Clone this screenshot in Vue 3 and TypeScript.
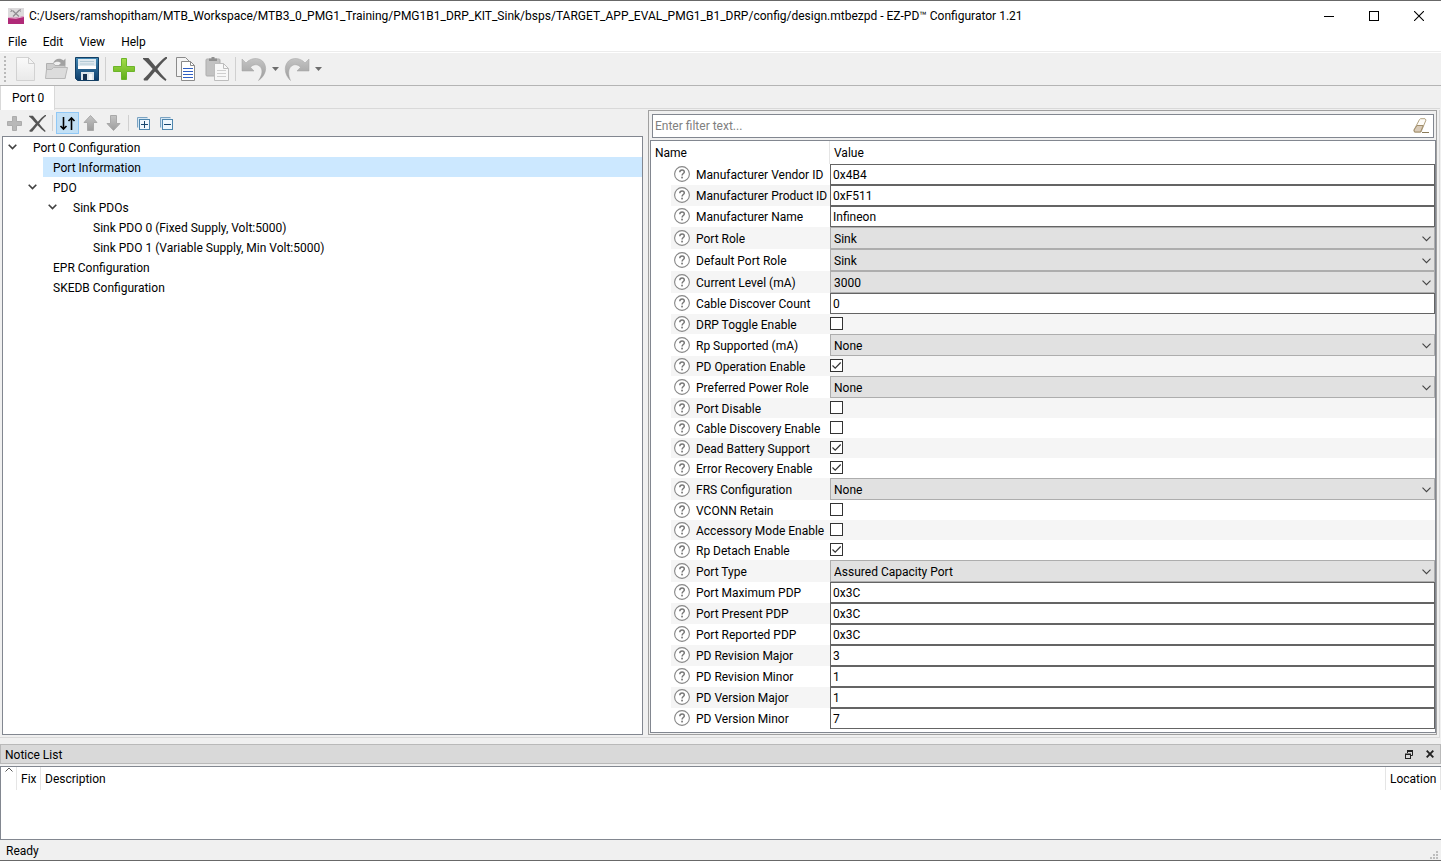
<script setup lang="ts">
import { computed, ref } from 'vue'

type Kind = 'text' | 'select' | 'check'

interface Property {
  label: string
  kind: Kind
  value: string | boolean
}

interface TreeNode {
  label: string
  level: number
  branch: boolean
}

const menus = ['File', 'Edit', 'View', 'Help']

const tree: TreeNode[] = [
  { label: 'Port 0 Configuration', level: 0, branch: true },
  { label: 'Port Information', level: 1, branch: false },
  { label: 'PDO', level: 1, branch: true },
  { label: 'Sink PDOs', level: 2, branch: true },
  { label: 'Sink PDO 0 (Fixed Supply, Volt:5000)', level: 3, branch: false },
  { label: 'Sink PDO 1 (Variable Supply, Min Volt:5000)', level: 3, branch: false },
  { label: 'EPR Configuration', level: 1, branch: false },
  { label: 'SKEDB Configuration', level: 1, branch: false },
]

const selected = ref('Port Information')
const filter = ref('')
const sorted = ref(true)

const properties = ref<Property[]>([
  { label: 'Manufacturer Vendor ID', kind: 'text', value: '0x4B4' },
  { label: 'Manufacturer Product ID', kind: 'text', value: '0xF511' },
  { label: 'Manufacturer Name', kind: 'text', value: 'Infineon' },
  { label: 'Port Role', kind: 'select', value: 'Sink' },
  { label: 'Default Port Role', kind: 'select', value: 'Sink' },
  { label: 'Current Level (mA)', kind: 'select', value: '3000' },
  { label: 'Cable Discover Count', kind: 'text', value: '0' },
  { label: 'DRP Toggle Enable', kind: 'check', value: false },
  { label: 'Rp Supported (mA)', kind: 'select', value: 'None' },
  { label: 'PD Operation Enable', kind: 'check', value: true },
  { label: 'Preferred Power Role', kind: 'select', value: 'None' },
  { label: 'Port Disable', kind: 'check', value: false },
  { label: 'Cable Discovery Enable', kind: 'check', value: false },
  { label: 'Dead Battery Support', kind: 'check', value: true },
  { label: 'Error Recovery Enable', kind: 'check', value: true },
  { label: 'FRS Configuration', kind: 'select', value: 'None' },
  { label: 'VCONN Retain', kind: 'check', value: false },
  { label: 'Accessory Mode Enable', kind: 'check', value: false },
  { label: 'Rp Detach Enable', kind: 'check', value: true },
  { label: 'Port Type', kind: 'select', value: 'Assured Capacity Port' },
  { label: 'Port Maximum PDP', kind: 'text', value: '0x3C' },
  { label: 'Port Present PDP', kind: 'text', value: '0x3C' },
  { label: 'Port Reported PDP', kind: 'text', value: '0x3C' },
  { label: 'PD Revision Major', kind: 'text', value: '3' },
  { label: 'PD Revision Minor', kind: 'text', value: '1' },
  { label: 'PD Version Major', kind: 'text', value: '1' },
  { label: 'PD Version Minor', kind: 'text', value: '7' },
])

const visible = computed(() =>
  properties.value.filter((p) => p.label.toLowerCase().includes(filter.value.toLowerCase())),
)

const idOf = (label: string) => 'p-' + label.toLowerCase().replace(/[^a-z0-9]+/g, '-')
</script>

<template>
  <div class="window">
    <svg class="defs" width="0" height="0" aria-hidden="true">
      <defs>
        <linearGradient id="g-grey" x1="0" y1="0" x2="0" y2="1">
          <stop offset="0" stop-color="#c4c4c4" /><stop offset="1" stop-color="#9c9c9c" />
        </linearGradient>
        <linearGradient id="g-page" x1="0" y1="0" x2="0" y2="1">
          <stop offset="0" stop-color="#fafafa" /><stop offset="1" stop-color="#e9e9e9" />
        </linearGradient>
        <linearGradient id="g-green" x1="0" y1="0" x2="0" y2="1">
          <stop offset="0" stop-color="#a5dc4a" /><stop offset="1" stop-color="#5fae18" />
        </linearGradient>
        <linearGradient id="g-blue" x1="0" y1="0" x2="0" y2="1">
          <stop offset="0" stop-color="#4389b5" /><stop offset="1" stop-color="#0d3c69" />
        </linearGradient>
      </defs>
    </svg>

    <header class="titlebar">
      <svg class="app-icon" width="16" height="16" viewBox="0 0 16 16" aria-hidden="true">
        <rect width="16" height="16" fill="#b02a78" />
        <path d="M0 0h16v8Q8 11 0 9z" fill="#dcdadc" />
        <path d="M4.500 2.500l6.500 6M11.500 2L5 8.500" stroke="#8f8b91" stroke-width="1.200" fill="none" />
        <path d="M3 1.500l1 1.500-1.500.5M12.500 1l-1 1.500 1.500.8" stroke="#8f8b91" fill="none" />
        <path d="M0 9.500Q8 11.500 16 8.500" stroke="#e7b8d3" fill="none" />
      </svg>
      <h1 class="title">C:/Users/ramshopitham/MTB_Workspace/MTB3_0_PMG1_Training/PMG1B1_DRP_KIT_Sink/bsps/TARGET_APP_EVAL_PMG1_B1_DRP/config/design.mtbezpd - EZ-PD™ Configurator 1.21</h1>
      <div class="win-controls">
        <button type="button" aria-label="Minimize">
          <svg width="10" height="10" viewBox="0 0 10 10"><path d="M0 5.500h10" stroke="#000" /></svg>
        </button>
        <button type="button" aria-label="Maximize">
          <svg width="10" height="10" viewBox="0 0 10 10"><rect x=".5" y=".5" width="9" height="9" fill="none" stroke="#000" /></svg>
        </button>
        <button type="button" aria-label="Close">
          <svg width="10" height="10" viewBox="0 0 10 10"><path d="M0 0l10 10M10 0L0 10" stroke="#000" stroke-width="1.100" /></svg>
        </button>
      </div>
    </header>

    <nav class="menubar">
      <button v-for="m in menus" :key="m" type="button">{{ m }}</button>
    </nav>

    <div class="toolbar" role="toolbar" aria-label="Main">
      <span class="grip"></span>
      <button type="button" class="tool" aria-label="New">
        <svg width="24" height="24" viewBox="0 0 24 24">
          <path d="M3.500 .5h12l6 6v17h-18z" fill="url(#g-page)" stroke="#d2d2d2" />
          <path d="M15.500 .5v6h6z" fill="#f4f4f4" stroke="#cfcfcf" />
        </svg>
      </button>
      <button type="button" class="tool" aria-label="Open">
        <svg width="24" height="24" viewBox="0 0 24 24">
          <path d="M2.500 21.500V6.500h7l1.500 2h10v13z" fill="#cdcdcd" stroke="#b0b0b0" />
          <path d="M1.500 21.500l1-9h5l2-2h14l-2.500 11z" fill="#dcdcdc" stroke="#b8b8b8" />
          <path d="M9 6.500C10.500 1.500 16 .5 19.500 3.500l2-2V8.500h-7l2.400-2.400C14.500 4 11.500 4.500 9 6.500z" fill="#a2a2a2" />
        </svg>
      </button>
      <button type="button" class="tool" aria-label="Save">
        <svg width="24" height="24" viewBox="0 0 24 24">
          <path d="M.5 .5h23v23H2.500l-2-2z" fill="url(#g-blue)" stroke="#133e63" />
          <rect x="3" y="2" width="18" height="10" fill="#dfe9ef" />
          <path d="M5 4.500h14M5 7h14" stroke="#b4cbd6" />
          <path d="M3 9h18v3H3z" fill="#fff" />
          <rect x="6" y="15" width="13" height="8" fill="#dde5ea" />
          <rect x="8" y="17" width="4" height="6" fill="#16304e" />
          <path d="M14 17h3v6h-3z" fill="#f7fafb" />
        </svg>
      </button>
      <span class="sep"></span>
      <button type="button" class="tool" aria-label="Add">
        <svg width="24" height="24" viewBox="0 0 24 24">
          <path d="M9.500 1.500h5v8h8v5h-8v8h-5v-8h-8v-5h8z" fill="url(#g-green)" stroke="#6cb52a" />
        </svg>
      </button>
      <button type="button" class="tool" aria-label="Delete">
        <svg width="24" height="24" viewBox="0 0 24 24">
          <path d="M0 1h5.500C8 4 10 6.500 12.500 9.500 15.500 6 19 2.500 22.500 0H24v1.500C20.500 4 17.500 8 14.300 12c3 4 6.200 7.800 9.200 10.500l-1 1.500C19 21.500 15.500 18 12 14.500 9.500 17.500 7 20.500 4.500 23.500H1L.5 22C3.500 19 7 15.500 9.700 12 6.500 8.500 3.500 4.500 0 2z" fill="#555" />
        </svg>
      </button>
      <button type="button" class="tool" aria-label="Copy">
        <svg width="24" height="24" viewBox="0 0 24 24">
          <path d="M2.500 .5h9l4 4v15h-13z" fill="#f4f4f4" stroke="#8b8b8b" />
          <path d="M7.500 4.500h9l4 4v15h-13z" fill="#fff" stroke="#8b8b8b" />
          <path d="M16.500 4.500v4h4" fill="none" stroke="#8b8b8b" />
          <path d="M9 11.500h10M9 14.500h10M9 17.500h10M9 20.500h10" stroke="#2f5fc4" />
        </svg>
      </button>
      <button type="button" class="tool" aria-label="Paste">
        <svg width="24" height="24" viewBox="0 0 24 24">
          <rect x="1" y="2" width="14" height="17" rx="1" fill="#c2c2c2" stroke="#adadad" />
          <path d="M4 4V1.500h2.500V0h3v1.500H12V4z" fill="#8f8f8f" />
          <path d="M9.500 6.500h9l5 5v12h-14z" fill="#f8f8f8" stroke="#bdbdbd" />
          <path d="M18.500 6.500v5h5" fill="none" stroke="#bdbdbd" />
          <path d="M12 13.500h9M12 16.500h9M12 19.500h9" stroke="#cfcfcf" />
        </svg>
      </button>
      <span class="sep"></span>
      <button type="button" class="tool" aria-label="Undo">
        <svg width="26" height="24" viewBox="0 0 26 24">
          <path d="M1 2l4 4C9 1 17 0 21.500 4 27 9.500 25 18.500 17.500 23.500c4-5.500 4.500-11 1.500-14-2.700-2.600-7-2.300-9.500 .8L13 14H1z" fill="url(#g-grey)" stroke="#a2a2a2" stroke-width=".5" />
        </svg>
      </button>
      <button type="button" class="drop" aria-label="Undo history">
        <svg width="7" height="4" viewBox="0 0 7 4"><path d="M0 0h7L3.500 4z" fill="#6d6d6d" /></svg>
      </button>
      <button type="button" class="tool" aria-label="Redo">
        <svg width="26" height="24" viewBox="0 0 26 24">
          <path d="M25 2l-4 4C17 1 9 0 4.500 4-1 9.500 1 18.500 6.500 23.500 4 18 4 12.500 7 9.500c2.700-2.600 7-2.300 9.500 .8L13 14h12z" fill="url(#g-grey)" stroke="#a2a2a2" stroke-width=".5" />
        </svg>
      </button>
      <button type="button" class="drop" aria-label="Redo history">
        <svg width="7" height="4" viewBox="0 0 7 4"><path d="M0 0h7L3.500 4z" fill="#6d6d6d" /></svg>
      </button>
    </div>

    <div class="tabs" role="tablist">
      <button type="button" class="tab" role="tab" aria-selected="true">Port 0</button>
      <span class="tab-rest"></span>
    </div>

    <main class="pane">
      <section class="left">
        <div class="toolbar small" role="toolbar" aria-label="Tree">
          <button type="button" class="tool" aria-label="Add item">
            <svg width="15" height="15" viewBox="0 0 15 15">
              <path d="M5.500 .5h4v5h5v4h-5v5h-4v-5h-5v-4h5z" fill="#b8b8b8" stroke="#acacac" />
            </svg>
          </button>
          <button type="button" class="tool" aria-label="Remove item">
            <svg width="17" height="17" viewBox="0 0 24 24">
              <path d="M0 1h5.500C8 4 10 6.500 12.500 9.500 15.500 6 19 2.500 22.500 0H24v1.500C20.500 4 17.500 8 14.300 12c3 4 6.200 7.800 9.200 10.500l-1 1.500C19 21.500 15.500 18 12 14.500 9.500 17.500 7 20.500 4.500 23.500H1L.5 22C3.500 19 7 15.500 9.700 12 6.500 8.500 3.500 4.500 0 2z" fill="#555" />
            </svg>
          </button>
          <span class="sep"></span>
          <button type="button" class="tool" :class="{ on: sorted }" :aria-pressed="sorted" aria-label="Sort" @click="sorted = !sorted">
            <svg width="17" height="16" viewBox="0 0 17 16">
              <path d="M4.500 2v12M1.500 11l3 3 3-3M12.500 15V3M9.500 6l3-3 3 3" fill="none" stroke="#000" stroke-width="1.600" />
            </svg>
          </button>
          <button type="button" class="tool" aria-label="Move up">
            <svg width="15" height="16" viewBox="0 0 15 16">
              <path d="M7.500 .5l6.500 7h-3.500v8h-6v-8H1z" fill="url(#g-grey)" stroke="#a9a9a9" />
            </svg>
          </button>
          <button type="button" class="tool" aria-label="Move down">
            <svg width="15" height="16" viewBox="0 0 15 16">
              <path d="M7.500 15.500l6.500-7h-3.500v-8h-6v8H1z" fill="url(#g-grey)" stroke="#a9a9a9" />
            </svg>
          </button>
          <span class="sep"></span>
          <button type="button" class="tool" aria-label="Expand all">
            <svg width="13" height="13" viewBox="0 0 13 13">
              <path d="M.5 10.500V.5h10" fill="none" stroke="#7ba3c2" />
              <rect x="1" y="1" width="10" height="10" fill="#d4e6f3" />
              <rect x="2.500" y="2.500" width="10" height="10" fill="#eef7fd" stroke="#4e86ae" />
              <path d="M4 7.500h7M7.500 4v7" stroke="#16466f" />
            </svg>
          </button>
          <button type="button" class="tool" aria-label="Collapse all">
            <svg width="13" height="13" viewBox="0 0 13 13">
              <path d="M.5 10.500V.5h10" fill="none" stroke="#7ba3c2" />
              <rect x="1" y="1" width="10" height="10" fill="#d4e6f3" />
              <rect x="2.500" y="2.500" width="10" height="10" fill="#eef7fd" stroke="#4e86ae" />
              <path d="M4 7.500h7" stroke="#16466f" />
            </svg>
          </button>
        </div>
        <ul class="tree" role="tree">
          <li v-for="n in tree" :key="n.label" :class="'level-' + n.level" role="treeitem" :aria-selected="selected === n.label" @click="selected = n.label">
            <span class="twist">
              <svg v-if="n.branch" width="10" height="6" viewBox="0 0 10 6"><path d="M.7 .7l3.800 3.800L8.300 .7" fill="none" stroke="#404040" stroke-width="1.600" /></svg>
            </span>
            <span class="node" :class="{ picked: selected === n.label }">{{ n.label }}</span>
          </li>
        </ul>
      </section>

      <section class="right">
        <div class="filter">
          <input v-model="filter" type="text" placeholder="Enter filter text..." aria-label="Filter" />
          <button type="button" aria-label="Clear filter" @click="filter = ''">
            <svg width="16" height="16" viewBox="0 0 16 16">
              <path d="M6.500 1.500l1-.8h4.500l1 1.300-5 12H1.500L1 12z" fill="#fdfbf7" stroke="#b3a382" />
              <path d="M4 7.500h6.200L7.500 14h-6L1 12z" fill="#d9cbb8" stroke="#a28f6c" />
              <path d="M9 14.500h7" stroke="#8a7a58" />
            </svg>
          </button>
        </div>
        <div class="grid-box">
          <table class="props">
            <thead>
              <tr><th class="name-col">Name</th><th>Value</th></tr>
            </thead>
            <tbody>
              <tr v-for="p in visible" :key="p.label" :class="'row-' + p.kind">
                <td>
                  <div class="name">
                    <svg width="16" height="16" viewBox="0 0 16 16" aria-hidden="true">
                      <circle cx="8" cy="8" r="7.400" fill="#fff" stroke="#868686" stroke-width="1.100" />
                      <path d="M5.800 6.200c0-3 4.500-3 4.500-.3 0 1.600-2.200 1.600-2.200 3.500" fill="none" stroke="#777" stroke-width="1.500" />
                      <rect x="7.200" y="10.700" width="1.700" height="1.700" fill="#777" />
                    </svg>
                    <label :for="idOf(p.label)">{{ p.label }}</label>
                  </div>
                </td>
                <td>
                  <input v-if="p.kind === 'text'" :id="idOf(p.label)" v-model="p.value" class="field" type="text" />
                  <div v-else-if="p.kind === 'select'" class="combo">
                    <select :id="idOf(p.label)" v-model="p.value"><option>{{ p.value }}</option></select>
                    <svg width="9" height="6" viewBox="0 0 9 6" aria-hidden="true"><path d="M.5 .7l4 4 4-4" fill="none" stroke="#444" stroke-width="1.100" /></svg>
                  </div>
                  <div v-else class="check">
                    <input :id="idOf(p.label)" v-model="p.value" type="checkbox" />
                    <svg v-if="p.value" width="13" height="13" viewBox="0 0 13 13" aria-hidden="true"><path d="M2.500 6.500l2.700 2.700 5.500-5.700" fill="none" stroke="#333" stroke-width="1.200" /></svg>
                  </div>
                </td>
              </tr>
            </tbody>
          </table>
        </div>
      </section>
    </main>

    <section class="notices">
      <header class="dock-title">
        <h2>Notice List</h2>
        <button type="button" aria-label="Float">
          <svg width="8" height="9" viewBox="0 0 8 9"><path d="M2.500 3V1h5v4.500H6" fill="none" stroke="#222" /><path d="M2 1h6" stroke="#222" stroke-width="2" /><rect x=".5" y="4" width="5" height="4.500" fill="none" stroke="#222" /><path d="M0 4.500h6" stroke="#222" /></svg>
        </button>
        <button type="button" aria-label="Close notices">
          <svg width="8" height="8" viewBox="0 0 8 8"><path d="M.7 .7l6.600 6.600M7.300 .7L.7 7.300" stroke="#222" stroke-width="1.900" /></svg>
        </button>
      </header>
      <div class="notice-box">
        <table>
          <thead>
            <tr>
              <th class="mark" aria-label="Severity"><svg width="8" height="5" viewBox="0 0 8 5"><path d="M.5 4.500L4 1l3.500 3.500" fill="none" stroke="#555" /></svg></th>
              <th class="fix">Fix</th>
              <th>Description</th>
              <th class="location">Location</th>
            </tr>
          </thead>
        </table>
      </div>
    </section>

    <footer class="status">
      <span>Ready</span>
      <svg width="9" height="9" viewBox="0 0 9 9" aria-hidden="true">
        <path d="M6 0h2v2H6zM6 3h2v2H6zM3 3h2v2H3zM6 6h2v2H6zM3 6h2v2H3zM0 6h2v2H0z" fill="#bdbdbd" />
      </svg>
    </footer>
  </div>
</template>

<style>
html,
body {
  margin: 0;
  height: 100%;
}
</style>

<style scoped>
.window {
  display: flex;
  flex-direction: column;
  box-sizing: border-box;
  min-height: 100vh;
  border-top: 1px solid #686868;
  border-bottom: 1px solid #686868;
  background: #f0f0f0;
  color: #000;
  font-family: Roboto, "Open Sans", sans-serif;
  font-size: 12px;
  line-height: 16px;
}
.window *,
.window *::before {
  box-sizing: border-box;
}
.defs {
  position: absolute;
}
button,
input,
select {
  margin: 0;
  padding: 0;
  border: 0;
  border-radius: 0;
  background: none;
  color: inherit;
  font: inherit;
  outline: none;
}
h1,
h2,
th {
  margin: 0;
  font-size: 12px;
  font-weight: 400;
  text-align: left;
}
svg {
  display: block;
  flex: none;
}

.titlebar {
  display: flex;
  align-items: center;
  height: 29px;
  padding-left: 8px;
  background: #fff;
}
.title {
  flex: 1;
  min-width: 0;
  margin-left: 5px;
  overflow: hidden;
  white-space: nowrap;
}
.win-controls {
  display: flex;
  align-self: stretch;
}
.win-controls button {
  display: flex;
  align-items: center;
  justify-content: center;
  width: 45px;
}
.menubar {
  display: flex;
  height: 22px;
  border-bottom: 1px solid #ececec;
  background: #fff;
}
.menubar button {
  padding: 2px 8px 0;
}

.toolbar {
  display: flex;
  align-items: center;
  height: 34px;
  border-top: 1px solid #fff;
  border-bottom: 1px solid #b4b4b4;
}
.grip {
  width: 2px;
  height: 26px;
  margin: 0 3px 0 4px;
  background: repeating-linear-gradient(#b9b9b9 0 2px, transparent 2px 4px);
}
.tool {
  display: flex;
  align-items: center;
  justify-content: center;
  width: 31px;
  height: 31px;
}
.drop {
  display: flex;
  align-items: center;
  justify-content: center;
  width: 12px;
  height: 31px;
}
.sep {
  width: 1px;
  height: 24px;
  margin: 0 2px 0 3px;
  background: #d0d0d0;
}

.tabs {
  display: flex;
  height: 24px;
}
.tab {
  padding: 0 10px 0 11px;
  border-right: 1px solid #d9d9d9;
  border-left: 1px solid #d9d9d9;
  background: #fff;
}
.tab-rest {
  flex: 1;
  height: 23px;
  margin-right: 1px;
  border-bottom: 1px solid #d9d9d9;
}

.pane {
  display: grid;
  flex: 1;
  grid-template-columns: 641fr 789fr;
  gap: 5px;
  margin-right: 1px;
  padding: 0 2px 2px;
  border: solid #d9d9d9;
  border-width: 0 1px 1px 0;
}
.left {
  display: flex;
  flex-direction: column;
  min-width: 0;
}
.small {
  height: 26px;
  padding-left: 1px;
  border: 0;
}
.small .tool {
  width: 23px;
  height: 22px;
}
.small .sep {
  height: 16px;
  margin: 0 3px;
}
.small .tool + .tool + .sep {
  margin-right: 3px;
}
.small .on {
  border: 1px solid #90c8f6;
  background: #c3e0f5;
}
.tree {
  flex: 1;
  margin: 0;
  padding: 0;
  border: 1px solid #828790;
  background: #fff;
  list-style: none;
}
.tree li {
  display: flex;
  height: 20px;
  line-height: 18px;
  white-space: nowrap;
}
.level-1 {
  padding-left: 20px;
}
.level-2 {
  padding-left: 40px;
}
.level-3 {
  padding-left: 60px;
}
.twist {
  display: flex;
  align-items: center;
  justify-content: center;
  width: 20px;
}
.node {
  flex: 1;
  padding: 2px 0 0 10px;
}
.picked {
  background: #cce8ff;
}

.right {
  display: flex;
  flex-direction: column;
  min-width: 0;
  border: 1px solid #a0a0a0;
}
.filter {
  display: flex;
  align-items: center;
  height: 24px;
  margin: 3px 2px 2px 3px;
  padding: 0 4px 0 2px;
  border: 1px solid #828790;
  background: #fff;
}
.filter input {
  flex: 1;
  min-width: 0;
}
.filter input::placeholder {
  color: #808080;
  opacity: 1;
}
.grid-box {
  flex: 1;
  margin: 0 0 1px 1px;
  border: 1px solid #828790;
  background: #fff;
}
table {
  width: 100%;
  border-collapse: separate;
  border-spacing: 0;
  table-layout: fixed;
}
th,
td {
  padding: 0;
}
.props th {
  height: 23px;
  padding-left: 4px;
}
.props .name-col {
  width: 179px;
  border-right: 1px solid #e5e5e5;
}
.name {
  display: flex;
  align-items: center;
  height: 20px;
  gap: 6px;
  padding-left: 3px;
  white-space: nowrap;
}
.name label {
  padding-top: 1px;
}
.row-select .name {
  height: 22px;
}
.props td {
  vertical-align: top;
}
.props td:first-child {
  padding-left: 20px;
}
.props tbody tr:nth-child(even) {
  background: linear-gradient(#f5f5f5, #f5f5f5) 20px 0 no-repeat;
}
.field {
  display: block;
  width: 100%;
  height: 21px;
  padding-left: 2px;
  border: 1px solid #646464;
  background: #fff;
}
.combo {
  position: relative;
}
.combo select {
  display: block;
  width: 100%;
  height: 22px;
  padding: 2px 0 0 3px;
  border: 1px solid #adadad;
  background: #e1e1e1;
  appearance: none;
}
.combo svg {
  position: absolute;
  top: 9px;
  right: 4px;
  pointer-events: none;
}
.check {
  position: relative;
  height: 20px;
  padding-top: 3px;
}
.check input {
  display: block;
  width: 13px;
  height: 13px;
  border: 1px solid #333;
  background: #fff;
  appearance: none;
}
.check svg {
  position: absolute;
  top: 3px;
  left: 0;
  pointer-events: none;
}

.notices {
  margin-top: 6px;
}
.dock-title {
  display: flex;
  align-items: center;
  height: 20px;
  padding: 0 6px 0 4px;
  border: 1px solid #b9b9b9;
  background: #d9d9d9;
}
.dock-title h2 {
  flex: 1;
  padding-top: 2px;
}
.dock-title button {
  display: flex;
  align-items: center;
  justify-content: center;
  width: 9px;
  height: 16px;
  margin-left: 12px;
}
.notice-box {
  height: 74px;
  margin-top: 2px;
  border: 1px solid #828790;
  border-right: 0;
  background: #fff;
}
.notice-box th {
  height: 23px;
  padding-left: 4px;
  border-right: 1px solid #e5e5e5;
}
.notice-box .mark {
  width: 16px;
  vertical-align: top;
}
.notice-box .fix {
  width: 24px;
}
.notice-box .location {
  width: 55px;
}
.status {
  display: flex;
  align-items: center;
  height: 20px;
  padding: 0 2px 0 6px;
}
.status span {
  flex: 1;
  padding-top: 2px;
}
.status svg {
  align-self: flex-end;
}
</style>
